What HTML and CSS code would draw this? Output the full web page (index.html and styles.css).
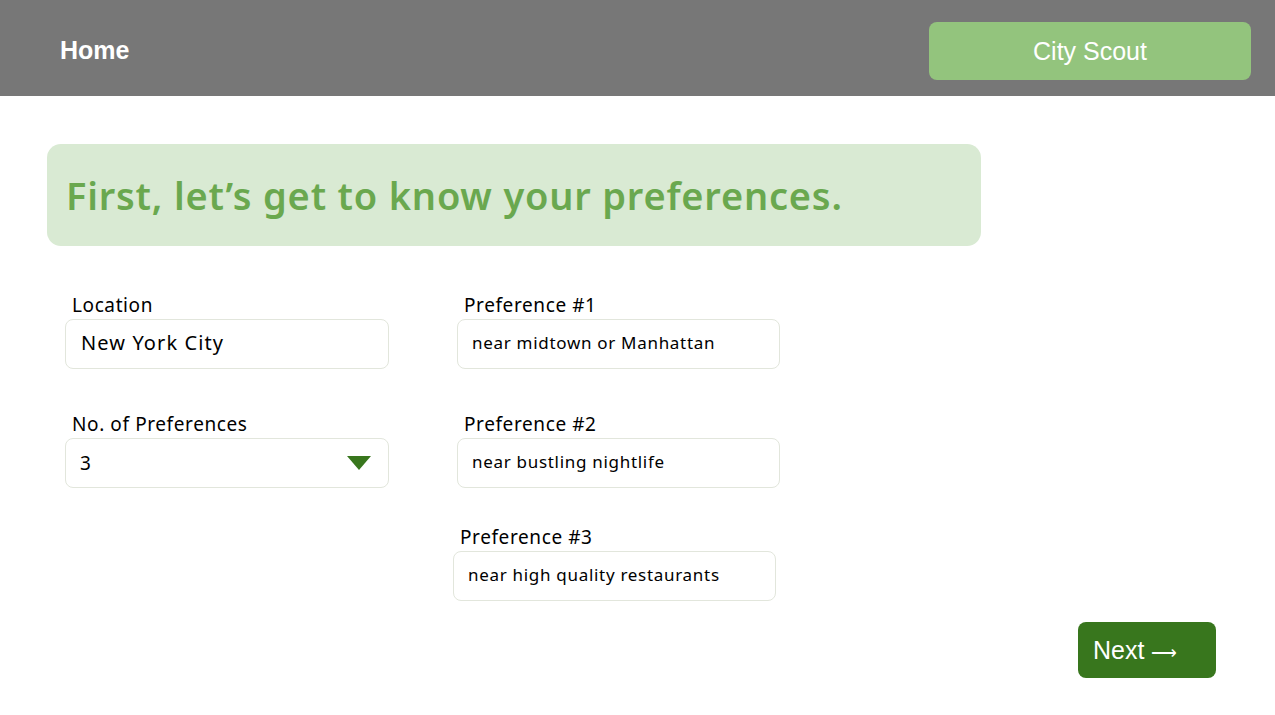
FILE: index.html
```html
<!DOCTYPE html>
<html lang="en">
<head>
<meta charset="utf-8">
<title>City Scout</title>
<link rel="stylesheet" href="styles.css">
</head>
<body>
<header class="topbar">
  <a class="home">Home</a>
  <div class="brand">City Scout</div>
</header>
<main class="content">
  <div class="banner">
    <h1>First, let’s get to know your preferences.</h1>
  </div>
  <div class="form">
    <div class="field">
      <label class="label">Location</label>
      <div class="input input-lg">New York City</div>
    </div>
    <div class="field">
      <label class="label">Preference #1</label>
      <div class="input">near midtown or Manhattan</div>
    </div>
    <div class="field">
      <label class="label">No. of Preferences</label>
      <div class="input select">
        <span>3</span>
        <svg class="caret" width="24" height="14" viewBox="0 0 24 14"><polygon points="0,0 24,0 12,14" fill="#38761d"/></svg>
      </div>
    </div>
    <div class="field">
      <label class="label">Preference #2</label>
      <div class="input">near bustling nightlife</div>
    </div>
    <div class="field spacer"></div>
    <div class="field field-shift">
      <label class="label">Preference #3</label>
      <div class="input">near high quality restaurants</div>
    </div>
  </div>
  <div class="actions">
    <button class="next">Next <span class="arrow">⟶</span></button>
  </div>
</main>
</body>
</html>
```

FILE: styles.css
```css
* { box-sizing: border-box; }
html, body { margin: 0; padding: 0; background: #ffffff; }
body { font-family: "Noto Sans", sans-serif; color: #000; }

.topbar {
  height: 96px;
  background: #777777;
  display: flex;
  align-items: center;
  justify-content: space-between;
  padding: 6px 24px 0 60px;
}
.home {
  font-family: "Liberation Sans", Arial, sans-serif;
  font-weight: 700;
  font-size: 25px;
  color: #ffffff;
  margin-top: -2px;
}
.brand {
  width: 322px;
  height: 58px;
  background: #93c47d;
  border-radius: 8px;
  color: #ffffff;
  font-family: "Liberation Sans", Arial, sans-serif;
  font-size: 25px;
  display: flex;
  align-items: center;
  justify-content: center;
}

.content { padding: 48px 59px 0 47px; }

.banner {
  width: 934px;
  height: 102px;
  background: #d9ead3;
  border-radius: 14px;
  display: flex;
  align-items: center;
  padding-left: 19px;
}
.banner h1 {
  margin: 0;
  font-size: 38px;
  font-weight: 600;
  color: #6aa84f;
  letter-spacing: 0.8px;
}

.form {
  margin-top: 47px;
  margin-left: 18px;
  display: grid;
  grid-template-columns: 324px 323px;
  column-gap: 68px;
  row-gap: 43px;
}
.field { display: flex; flex-direction: column; }
.field-shift { margin-left: -4px; margin-top: -6px; width: 323px; }
.label {
  font-size: 19px;
  line-height: 25px;
  padding-left: 7px;
  margin-bottom: 1px;
  color: #000;
  letter-spacing: 0.6px;
}
.input {
  height: 50px;
  border: 1px solid #e2e6dc;
  border-radius: 8px;
  display: flex;
  align-items: center;
  padding: 0 0 4px 14px;
  font-size: 17px;
  letter-spacing: 0.7px;
  color: #000;
}
.input-lg { font-size: 20px; padding-left: 15px; letter-spacing: 1.1px; }
.select { justify-content: space-between; padding-right: 17px; padding-bottom: 0; font-size: 19px; }
.caret { display: block; }

.actions { display: flex; justify-content: flex-end; margin-top: 21px; }
.next {
  width: 138px;
  height: 56px;
  background: #38761d;
  color: #ffffff;
  border: none;
  border-radius: 8px;
  font-family: "Liberation Sans", Arial, sans-serif;
  font-size: 25px;
  text-align: left;
  padding-left: 15px;
}
.arrow { font-family: "DejaVu Sans", sans-serif; font-size: 18px; font-weight: 300; }
```
